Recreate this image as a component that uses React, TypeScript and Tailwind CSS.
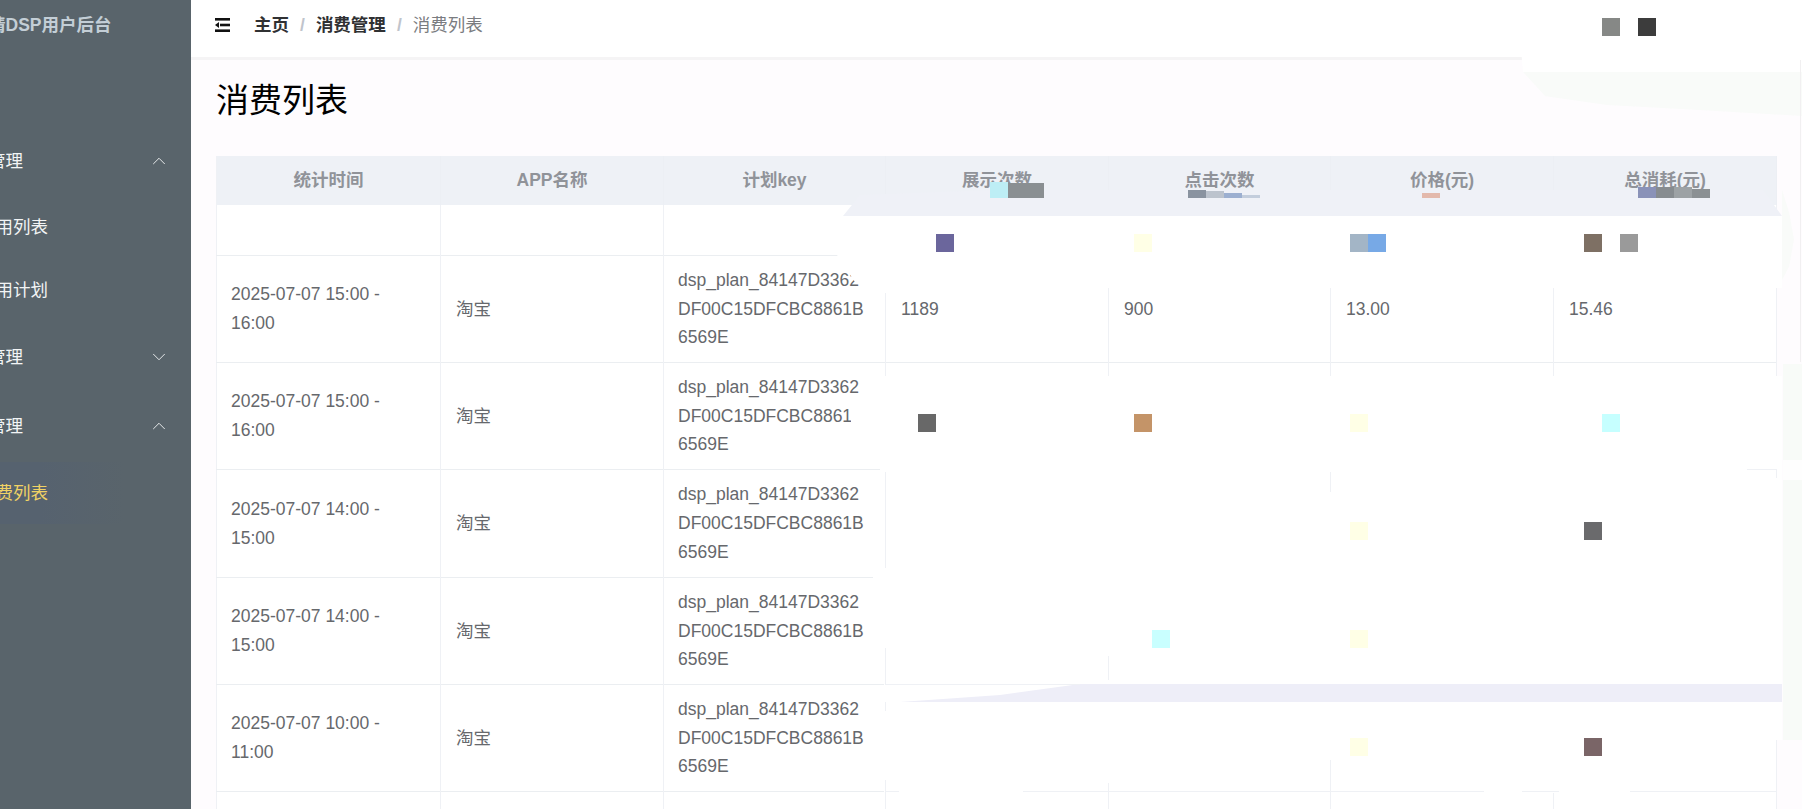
import React from 'react';
import { ChevronDown, ChevronUp } from 'lucide-react';

const PLAN_KEY = 'dsp_plan_84147D3362DF00C15DFCBC8861B6569E';

const rows = [
  { time: '2025-07-07 15:00 - 16:00', app: '淘宝', key: PLAN_KEY, shows: '1189', clicks: '900', price: '13.00', total: '15.46', height: 'h-[107px]' },
  { time: '2025-07-07 15:00 - 16:00', app: '淘宝', key: PLAN_KEY, shows: '', clicks: '', price: '', total: '', height: 'h-[107px]' },
  { time: '2025-07-07 14:00 - 15:00', app: '淘宝', key: PLAN_KEY, shows: '', clicks: '', price: '', total: '', height: 'h-[108px]' },
  { time: '2025-07-07 14:00 - 15:00', app: '淘宝', key: PLAN_KEY, shows: '', clicks: '', price: '', total: '', height: 'h-[107px]' },
  { time: '2025-07-07 10:00 - 11:00', app: '淘宝', key: PLAN_KEY, shows: '', clicks: '', price: '', total: '', height: 'h-[107px]' },
];

const columns = ['统计时间', 'APP名称', '计划key', '展示次数', '点击次数', '价格(元)', '总消耗(元)'];

// white and tinted areas lying over the page
const patches = [
  'left-[1518px] top-0 w-[284px] h-[72px] bg-white [clip-path:polygon(0_0,100%_0,100%_100%,5px_100%,0_14px)]',
  'left-[1523px] top-[72px] w-[279px] h-[44px] bg-[#f9fbf9] [clip-path:polygon(0_0,100%_0,100%_100%,60%_85%,30%_75%,8%_55%)]',
  'left-[1782px] top-[190px] w-[12px] h-[90px] bg-[#f9fbf9] [clip-path:polygon(0_0,60%_25%,100%_55%,60%_85%,0_100%)]',
  'left-[1783px] top-[364px] w-[19px] h-[96px] bg-[#f8fbf8]',
  'left-[1783px] top-[460px] w-[19px] h-[20px] bg-[#fefefe]',
  'left-[1783px] top-[480px] w-[19px] h-[260px] bg-[#f8fbf8]',
  'left-[1800px] top-[60px] w-px h-[302px] bg-[#f1f0f1]',
  'left-[843px] top-[190px] w-[939px] h-[26px] bg-[#eff1f7] [clip-path:polygon(0_100%,17px_5px,150px_0,920px_0,100%_100%)]',
  'left-[837px] top-[216px] w-[945px] h-[72px] bg-white [clip-path:polygon(0_0,100%_0,100%_100%,48px_100%,48px_77px,18px_66px,0_39px)]',
  'left-[880px] top-[280px] w-[10px] h-[13px] bg-white',
  'left-[884px] top-[376px] w-[898px] h-[364px] bg-white',
  'left-[884px] top-[740px] w-[892px] h-[69px] bg-white',
  'left-[851px] top-[405px] w-[33px] h-[27px] bg-white',
  'left-[880px] top-[466px] w-[6px] h-[6px] bg-white',
  'left-[873px] top-[575px] w-[12px] h-[4px] bg-white',
  'left-[900px] top-[684px] w-[882px] h-[18px] bg-[#eeeef8] [clip-path:polygon(0_100%,100px_11px,180px_0,100%_0,100%_100%)]',
];

// pieces of the table's grid that show through the white areas
const gridLines = [
  'left-[885px] top-[472px] w-px h-[96px]',
  'left-[1330px] top-[472px] w-px h-[20px]',
  'left-[1747px] top-[469px] w-[29px] h-px',
  'left-[1776px] top-[469px] w-px h-[9px]',
  'left-[885px] top-[648px] w-px h-[36px]',
  'left-[1108px] top-[656px] w-px h-[24px]',
  'left-[885px] top-[684px] w-[195px] h-px',
  'left-[885px] top-[702px] w-px h-[9px]',
  'left-[885px] top-[780px] w-px h-[29px]',
  'left-[1108px] top-[783px] w-px h-[26px]',
  'left-[1330px] top-[760px] w-px h-[49px]',
  'left-[1553px] top-[793px] w-px h-[16px]',
  'left-[1776px] top-[740px] w-px h-[69px]',
  'left-[885px] top-[791px] w-[14px] h-px',
  'left-[1023px] top-[791px] w-[461px] h-px',
  'left-[1522px] top-[791px] w-[37px] h-px',
  'left-[1630px] top-[791px] w-[146px] h-px',
];

const squares = [
  'left-[1602px] top-[18px] w-[18px] h-[18px] bg-[#868886]',
  'left-[1638px] top-[18px] w-[18px] h-[18px] bg-[#3c3c3c]',
  'left-[990px] top-[182px] w-[18px] h-[16px] bg-[#bdeef5]',
  'left-[1008px] top-[183px] w-[36px] h-[15px] bg-[#8a8f92]',
  'left-[1188px] top-[190px] w-[18px] h-[8px] bg-[#8a93a0]',
  'left-[1206px] top-[191px] w-[18px] h-[7px] bg-[#bcc3cd]',
  'left-[1224px] top-[193px] w-[18px] h-[5px] bg-[#9cafd0]',
  'left-[1242px] top-[195px] w-[18px] h-[3px] bg-[#c3cddc]',
  'left-[1422px] top-[193px] w-[18px] h-[5px] bg-[#e3b9ac]',
  'left-[1638px] top-[187px] w-[18px] h-[11px] bg-[#8a92b8]',
  'left-[1656px] top-[187px] w-[18px] h-[11px] bg-[#878c90]',
  'left-[1674px] top-[187px] w-[18px] h-[11px] bg-[#9da2a5]',
  'left-[1692px] top-[189px] w-[18px] h-[9px] bg-[#8b9093]',
  'left-[936px] top-[234px] w-[18px] h-[18px] bg-[#6b669c]',
  'left-[1134px] top-[234px] w-[18px] h-[18px] bg-[#ffffe6]',
  'left-[1350px] top-[234px] w-[18px] h-[18px] bg-[#a3b5c6]',
  'left-[1368px] top-[234px] w-[18px] h-[18px] bg-[#77a9e6]',
  'left-[1584px] top-[234px] w-[18px] h-[18px] bg-[#7e7064]',
  'left-[1620px] top-[234px] w-[18px] h-[18px] bg-[#9a9a9a]',
  'left-[918px] top-[414px] w-[18px] h-[18px] bg-[#686868]',
  'left-[1134px] top-[414px] w-[18px] h-[18px] bg-[#c49468]',
  'left-[1350px] top-[414px] w-[18px] h-[18px] bg-[#ffffe6]',
  'left-[1602px] top-[414px] w-[18px] h-[18px] bg-[#c6ffff]',
  'left-[1350px] top-[522px] w-[18px] h-[18px] bg-[#ffffe6]',
  'left-[1584px] top-[522px] w-[18px] h-[18px] bg-[#6a6a6c]',
  'left-[1152px] top-[630px] w-[18px] h-[18px] bg-[#c9ffff]',
  'left-[1350px] top-[630px] w-[18px] h-[18px] bg-[#ffffe6]',
  'left-[1350px] top-[738px] w-[18px] h-[18px] bg-[#ffffe6]',
  'left-[1584px] top-[738px] w-[18px] h-[18px] bg-[#7a6567]',
];

const Sidebar: React.FC = () => (
  <aside className="w-[191px] shrink-0 bg-[#59646b] overflow-hidden h-full">
    <div className="-ml-[47px] w-[238px]">
      <div className="h-[50px] flex items-center pl-[35px] text-[17.5px] font-bold text-[#c3ced6] whitespace-nowrap">精DSP用户后台</div>
      <nav className="pt-[80px] text-[17.5px] text-[#f2f4f5]">
        <div className="h-[62px] flex items-center justify-between pr-[21px]">应用管理<ChevronUp size={22} strokeWidth={1} /></div>
        <div className="h-[62px] mt-[4px] flex items-center pl-[25px]">应用列表</div>
        <div className="h-[62px] mt-[1px] flex items-center pl-[25px]">应用计划</div>
        <div className="h-[62px] mt-[5px] flex items-center justify-between pr-[21px]">计划管理<ChevronDown size={22} strokeWidth={1} /></div>
        <div className="h-[62px] mt-[7px] flex items-center justify-between pr-[21px]">消费管理<ChevronUp size={22} strokeWidth={1} /></div>
        <div className="h-[62px] mt-[5px] w-[172px] flex items-center pl-[25px] text-[#f0d264] bg-linear-to-r from-[#56626f] via-[#56626f] to-[#59646b]">消费列表</div>
      </nav>
    </div>
  </aside>
);

const Topbar: React.FC = () => (
  <header className="h-[60px] shrink-0 bg-white border-b-[3px] border-[#f5f4f5] flex items-start pt-[12px] pl-[24px] text-[17.5px]">
    <svg width="15" height="14" viewBox="0 0 15 14" className="mt-[6px] mr-[24px]" fill="#111">
      <rect x="0" y="0" width="15" height="2.6" />
      <rect x="5" y="5.7" width="10" height="2.6" />
      <polygon points="0,7 4,4 4,10" />
      <rect x="0" y="11.4" width="15" height="2.6" />
    </svg>
    <span className="font-bold text-[#303133]">主页</span>
    <span className="mx-[11px] text-[#c0c4cc] font-bold">/</span>
    <span className="font-bold text-[#303133]">消费管理</span>
    <span className="mx-[11px] text-[#c0c4cc] font-bold">/</span>
    <span className="text-[#7a7c80]">消费列表</span>
  </header>
);

const ConsumeTable: React.FC = () => (
  <table className="table-fixed border-collapse w-[1560px] bg-white text-[17.5px] leading-[28.75px] text-[#66686c] border-l border-[#eff1f5]">
    <colgroup>
      <col className="w-[224px]" />
      <col className="w-[223px]" />
      <col className="w-[222px]" />
      <col className="w-[223px]" />
      <col className="w-[222px]" />
      <col className="w-[223px]" />
      <col className="w-[223px]" />
    </colgroup>
    <thead>
      <tr className="h-[49px] bg-[#eef1f6]">
        {columns.map((c) => (
          <th key={c} className="font-bold text-center text-[#909399] border-r border-[#ecEff4]">{c}</th>
        ))}
      </tr>
    </thead>
    <tbody>
      <tr className="h-[50px] border-b border-[#ebeef1]">
        {columns.map((c) => (
          <td key={c} className="border-r border-[#eff1f5]" />
        ))}
      </tr>
      {rows.map((r, i) => (
        <tr key={i} className={`${r.height} border-b border-[#ebeef1]`}>
          <td className="pl-[14px] pr-[15px] pt-[1px] border-r border-[#eff1f5]">{r.time}</td>
          <td className="pl-[15px] pr-[15px] pt-[1px] border-r border-[#eff1f5]">{r.app}</td>
          <td className="pl-[14px] pr-[15px] pt-[1px] border-r border-[#eff1f5] break-all">{r.key}</td>
          <td className="pl-[15px] pr-[15px] pt-[1px] border-r border-[#eff1f5]">{r.shows}</td>
          <td className="pl-[15px] pr-[15px] pt-[1px] border-r border-[#eff1f5]">{r.clicks}</td>
          <td className="pl-[15px] pr-[15px] pt-[1px] border-r border-[#eff1f5]">{r.price}</td>
          <td className="pl-[15px] pr-[15px] pt-[1px] border-r border-[#eff1f5]">{r.total}</td>
        </tr>
      ))}
      <tr className="h-[107px]">
        {columns.map((c) => (
          <td key={c} className="border-r border-[#eff1f5]" />
        ))}
      </tr>
    </tbody>
  </table>
);

export default function App() {
  return (
    <div className="relative flex h-[809px] w-[1802px] overflow-hidden bg-[#fefcfe] font-['Liberation_Sans','Noto_Sans_CJK_SC',sans-serif]">
      <Sidebar />
      <main className="flex-1 min-w-0 flex flex-col">
        <Topbar />
        <div className="pl-[25px]">
          <h2 className="h-[96px] pt-[14px] text-[33px] leading-[54px] font-normal text-black">消费列表</h2>
          <ConsumeTable />
        </div>
      </main>

      {patches.map((p) => (
        <div key={p} className={`absolute ${p}`} />
      ))}
      {gridLines.map((g) => (
        <div key={g} className={`absolute bg-[#eff1f5] ${g}`} />
      ))}
      {squares.map((s) => (
        <div key={s} className={`absolute ${s}`} />
      ))}
    </div>
  );
}
